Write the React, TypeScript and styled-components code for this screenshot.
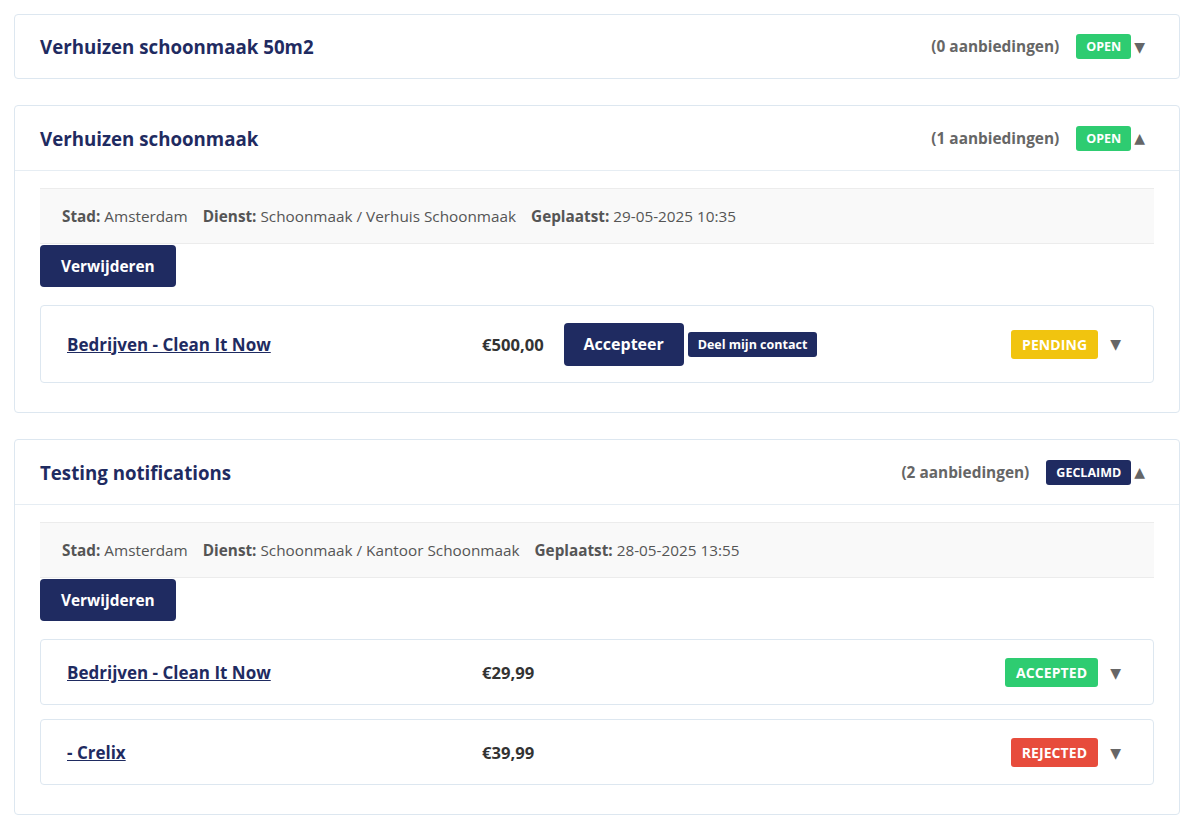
import React from "react";
import styled, { createGlobalStyle } from "styled-components";

const GlobalStyle = createGlobalStyle`
  body {
    margin: 0;
    background: #ffffff;
    font-family: "Open Sans", "Noto Sans", sans-serif;
  }
`;

type Status = "open" | "geclaimd" | "pending" | "accepted" | "rejected";

const badgeColors: Record<Status, string> = {
  open: "#2ecc71",
  geclaimd: "#1f2b61",
  pending: "#f1c40f",
  accepted: "#2ecc71",
  rejected: "#e74c3c",
};

type Offer = {
  company: string;
  price: string;
  status: Status;
  actions?: boolean;
};

type Request = {
  title: string;
  count: number;
  status: Status;
  open: boolean;
  city?: string;
  service?: string;
  placed?: string;
  offers?: Offer[];
};

const requests: Request[] = [
  { title: "Verhuizen schoonmaak 50m2", count: 0, status: "open", open: false },
  {
    title: "Verhuizen schoonmaak",
    count: 1,
    status: "open",
    open: true,
    city: "Amsterdam",
    service: "Schoonmaak / Verhuis Schoonmaak",
    placed: "29-05-2025 10:35",
    offers: [
      { company: "Bedrijven - Clean It Now", price: "€500,00", status: "pending", actions: true },
    ],
  },
  {
    title: "Testing notifications",
    count: 2,
    status: "geclaimd",
    open: true,
    city: "Amsterdam",
    service: "Schoonmaak / Kantoor Schoonmaak",
    placed: "28-05-2025 13:55",
    offers: [
      { company: "Bedrijven - Clean It Now", price: "€29,99", status: "accepted" },
      { company: "- Crelix", price: "€39,99", status: "rejected" },
    ],
  },
];

const Page = styled.div`
  padding: 14px 20px 0 14px;
  display: flex;
  flex-direction: column;
  gap: 26px;
`;

const Card = styled.section`
  border: 1px solid #dde7f0;
  border-radius: 4px;
  background: #fff;
`;

const Header = styled.div<{ $open: boolean }>`
  display: flex;
  align-items: center;
  height: ${(p) => (p.$open ? 64 : 63)}px;
  padding: 0 34px 0 25px;
  border-bottom: ${(p) => (p.$open ? "1px solid #e6edf3" : "none")};
`;

const Title = styled.h2`
  margin: 0;
  flex: 1;
  font-size: 18.7px;
  font-weight: 700;
  color: #1f2b61;
`;

const Count = styled.span`
  font-size: 15.4px;
  font-weight: 700;
  color: #666;
  margin-right: 17px;
`;

const HeadBadge = styled.span<{ $status: Status }>`
  display: inline-flex;
  align-items: center;
  height: 25px;
  padding: 0 10px;
  border-radius: 3px;
  background: ${(p) => badgeColors[p.$status]};
  color: #fff;
  font-size: 12.5px;
  font-weight: 700;
  text-transform: uppercase;
`;

const Arrow = styled.span`
  color: #666;
  font-family: "DejaVu Sans", sans-serif;
  font-size: 14px;
  margin-left: 3px;
  line-height: 1;
`;

const Body = styled.div`
  padding: 17px 25px 29px 25px;
`;

const Info = styled.div`
  display: flex;
  gap: 15px;
  align-items: center;
  height: 54px;
  padding: 0 22px;
  background: #f9f9f9;
  border-top: 1px solid #ececec;
  border-bottom: 1px solid #ececec;
  font-size: 15.3px;
  color: #555;

  b {
    font-weight: 700;
  }
`;

const DeleteButton = styled.button`
  display: block;
  margin: 1px 0 18px;
  height: 42px;
  padding: 0 21px;
  border: none;
  border-radius: 4px;
  background: #1f2b61;
  color: #fff;
  font-family: inherit;
  font-size: 15.4px;
  font-weight: 700;
`;

const OfferList = styled.div`
  display: flex;
  flex-direction: column;
  gap: 14px;
`;

const OfferRow = styled.div<{ $tall: boolean }>`
  display: flex;
  align-items: center;
  min-height: ${(p) => (p.$tall ? 76 : 63)}px;
  padding: ${(p) => (p.$tall ? 0 : "1px")} 32px 0 26px;
  border: 1px solid #dde7f0;
  border-radius: 4px;
`;

const Company = styled.a`
  flex: 0 0 415px;
  font-size: 17px;
  font-weight: 700;
  color: #1f2b61;
  text-decoration: underline;
  cursor: pointer;
`;

const Price = styled.span`
  font-size: 16.6px;
  font-weight: 700;
  color: #333;
  margin-right: 20px;
`;

const AcceptButton = styled.button`
  height: 43px;
  width: 120px;
  border: none;
  border-radius: 4px;
  background: #1f2b61;
  color: #fff;
  font-family: inherit;
  font-size: 16px;
  font-weight: 700;
`;

const ShareButton = styled.button`
  height: 25px;
  margin-left: 4px;
  padding: 0 10px;
  border: none;
  border-radius: 3px;
  background: #1f2b61;
  color: #fff;
  font-family: inherit;
  font-size: 12.5px;
  font-weight: 700;
`;

const OfferBadge = styled.span<{ $status: Status }>`
  margin-left: auto;
  display: inline-flex;
  align-items: center;
  height: 29px;
  padding: 0 11px;
  border-radius: 3px;
  background: ${(p) => badgeColors[p.$status]};
  color: #fff;
  font-size: 14px;
  font-weight: 700;
  letter-spacing: 0.1px;
  text-transform: uppercase;
`;

const OfferArrow = styled.span`
  color: #666;
  font-family: "DejaVu Sans", sans-serif;
  font-size: 14px;
  margin-left: 12px;
  line-height: 1;
`;

const App = () => {
  return (
    <>
      <GlobalStyle />
      <Page>
        {requests.map((r) => (
          <Card key={r.title}>
            <Header $open={r.open}>
              <Title>{r.title}</Title>
              <Count>({r.count} aanbiedingen)</Count>
              <HeadBadge $status={r.status}>{r.status}</HeadBadge>
              <Arrow>{r.open ? "▲" : "▼"}</Arrow>
            </Header>
            {r.open && (
              <Body>
                <Info>
                  <span>
                    <b>Stad:</b> {r.city}
                  </span>
                  <span>
                    <b>Dienst:</b> {r.service}
                  </span>
                  <span>
                    <b>Geplaatst:</b> {r.placed}
                  </span>
                </Info>
                <DeleteButton>Verwijderen</DeleteButton>
                <OfferList>
                  {r.offers?.map((o) => (
                    <OfferRow key={o.company + o.price} $tall={!!o.actions}>
                      <Company>{o.company}</Company>
                      <Price>{o.price}</Price>
                      {o.actions && (
                        <>
                          <AcceptButton>Accepteer</AcceptButton>
                          <ShareButton>Deel mijn contact</ShareButton>
                        </>
                      )}
                      <OfferBadge $status={o.status}>{o.status}</OfferBadge>
                      <OfferArrow>▼</OfferArrow>
                    </OfferRow>
                  ))}
                </OfferList>
              </Body>
            )}
          </Card>
        ))}
      </Page>
    </>
  );
};

export default App;
